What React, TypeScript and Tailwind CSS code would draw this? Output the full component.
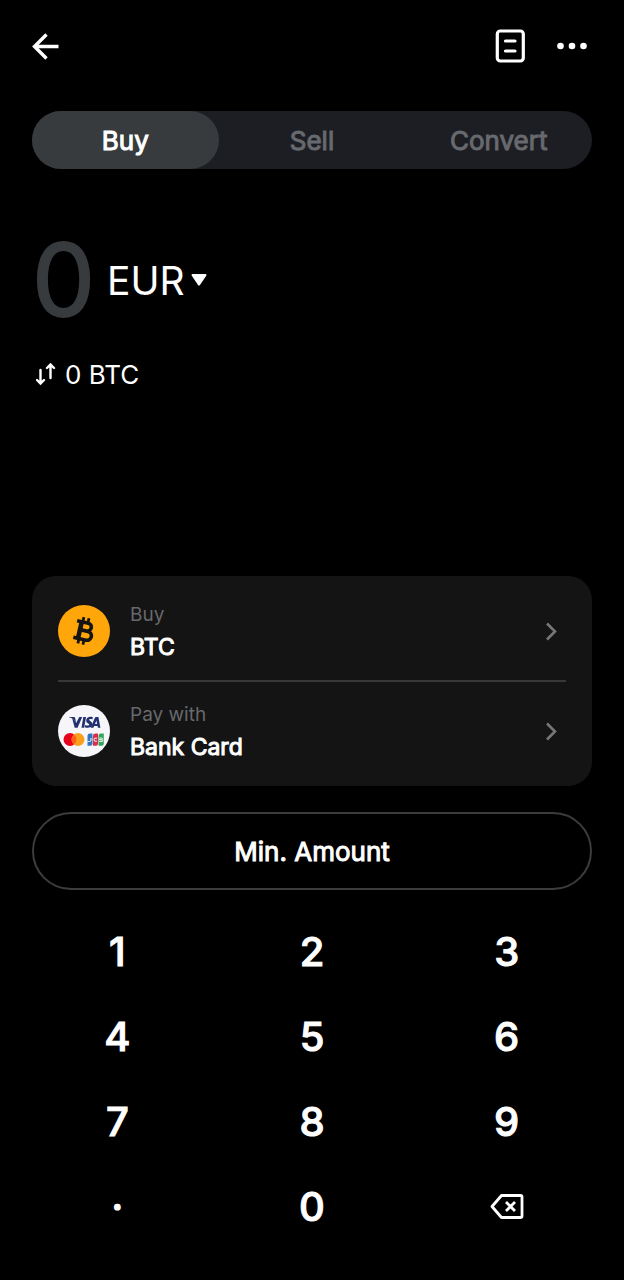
import { useState } from "react";
import clsx from "clsx";

const TABS = ["Buy", "Sell", "Convert"];
const CURRENCIES = ["EUR", "USD", "GBP"];
const KEYS = ["1", "2", "3", "4", "5", "6", "7", "8", "9", ".", "0"];

function BackIcon() {
  return (
    <svg width="28" height="28" viewBox="0 0 28 28" fill="none" stroke="currentColor" strokeWidth="3.4" aria-hidden="true">
      <path d="M26.5 14.5H3M14.5 2.5l-12 12 12 12" />
    </svg>
  );
}

function OrdersIcon() {
  return (
    <svg width="30" height="34" viewBox="0 0 30 34" fill="none" stroke="currentColor" strokeWidth="3.2" aria-hidden="true">
      <rect x="2.3" y="2" width="26" height="30" rx="3" />
      <path d="M10.5 12h9.5M10.5 22h9.5" strokeLinecap="round" />
    </svg>
  );
}

function MoreIcon() {
  return (
    <svg width="32" height="32" viewBox="0 0 32 32" fill="currentColor" aria-hidden="true">
      <circle cx="4.5" cy="16" r="3.3" />
      <circle cx="16" cy="16" r="3.3" />
      <circle cx="27.5" cy="16" r="3.3" />
    </svg>
  );
}

function CaretIcon() {
  return (
    <svg width="16" height="14" viewBox="0 0 16 14" fill="currentColor" aria-hidden="true">
      <path d="M1.6 1h12.8c1 0 1.4 1 .8 1.8L9 12c-.5.7-1.5.7-2 0L.8 2.8C.2 2 .6 1 1.6 1z" />
    </svg>
  );
}

function SwapIcon() {
  return (
    <svg width="20" height="24" viewBox="0 0 20 24" fill="none" stroke="currentColor" strokeWidth="2.4" strokeLinecap="round" aria-hidden="true">
      <path d="M4.5 7V20M1 17l3.5 3.5L8 17" />
      <path d="M14.5 15V1.5M11 5l3.5-3.5L18 5" />
    </svg>
  );
}

function ChevronIcon() {
  return (
    <svg width="12" height="20" viewBox="0 0 12 20" fill="none" stroke="currentColor" strokeWidth="2.6" aria-hidden="true">
      <path d="M2 2.5l8 8-8 8" />
    </svg>
  );
}

function BackspaceIcon() {
  return (
    <svg width="34" height="26" viewBox="0 0 34 26" fill="none" stroke="currentColor" strokeWidth="2.8" strokeLinejoin="round" aria-hidden="true">
      <path d="M11.5 1.5h19Q32 1.5 32 3v19q0 1.5-1.5 1.5h-19L2 12.5z" />
      <path d="M16 8l9 9M25 8l-9 9" />
    </svg>
  );
}

function BitcoinLogo() {
  return (
    <svg width="52" height="52" viewBox="0 0 52 52" aria-hidden="true">
      <circle cx="26" cy="26" r="26" fill="#ffa60a" />
      <g transform="rotate(13 26 26)" fill="none" stroke="#141414">
        <path d="M17 17.5h11.5a3.9 3.9 0 0 1 0 7.8H22M22 25.7h8a4.4 4.4 0 0 1 0 8.8H17" strokeWidth="3.6" />
        <path d="M21.8 17.5v17" strokeWidth="4.6" />
        <path d="M22.8 12.5v5M28 12.5v5M22.8 34.5v5M28 34.5v5" strokeWidth="2.8" />
      </g>
    </svg>
  );
}

function CardsLogo() {
  return (
    <svg width="52" height="52" viewBox="0 0 52 52" aria-hidden="true">
      <circle cx="26" cy="26" r="26" fill="#f6f6fa" />
      <g fill="#22306f">
        <path d="M11 12h4.5c1 0 1.5.4 1.7 1.3l.9 4.5C16.8 15 14.5 13 11 12.2z" />
        <path d="M21.3 12h2.9l-4.6 10.7h-2.9L14.2 13.5c2 1 3.3 2.6 3.9 4.6z" />
        <path d="M25.3 12H28l-1.8 10.7h-2.7z" />
        <path d="M34.8 12.3l-.4 2.2c-1.5-.7-3.3-.6-3.3.3 0 1 3.1 1.4 3.1 4.2 0 3.7-4.5 4.5-7.4 3.3l.4-2.4c1.7.9 4.1.9 4.1-.3 0-1.1-3.1-1.3-3.1-4.1 0-3.2 3.7-4.4 6.6-3.2z" />
        <path d="M38 12h2.4l2 10.7h-2.5l-.3-1.6h-3.5l-.7 1.6h-2.8l4.2-9.7c.2-.7.6-1 1.2-1zm.4 3.5-1.4 3.6h2.1z" />
      </g>
      <circle cx="12" cy="34.5" r="6.5" fill="#e9001d" />
      <circle cx="20" cy="34.5" r="6.5" fill="#f99f1b" />
      <path d="M16 29.4a6.5 6.5 0 0 1 0 10.2 6.5 6.5 0 0 1 0-10.2z" fill="#fb6016" />
      <path d="M32 28.5h2.5v10.2q0 2-2 2h-3v-10q0-2.2 2.5-2.2z" fill="#2f76c2" />
      <path d="M37.5 28.5H40v10.2q0 2-2 2h-3v-10q0-2.2 2.5-2.2z" fill="#db2c4c" />
      <path d="M43 28.5h2.8v10.2q0 2-2 2h-3.3v-10q0-2.2 2.5-2.2z" fill="#36a35a" />
      <path d="M29.5 36.5h2q1.5 0 1.5-1.5v-2M39 33.2h-2q-1 0-1 1.5t1 1.5h2M41.3 33h2.3q.8 0 .8.8t-.8.8h-2.3M41.3 34.7h2.6q.9 0 .9.9t-.9.9h-2.6" fill="none" stroke="#f6f6fa" strokeWidth="1" />
    </svg>
  );
}

type OptionRowProps = {
  logo: React.ReactNode;
  label: string;
  value: string;
};

function OptionRow({ logo, label, value }: OptionRowProps) {
  return (
    <button type="button" className="flex h-[98px] w-full items-center gap-5 pr-[9px] text-left">
      {logo}
      <span className="flex flex-1 flex-col">
        <span className="text-[19px] leading-8 text-[#67686d]">{label}</span>
        <span className="text-[23px] leading-8 [-webkit-text-stroke:1px]">{value}</span>
      </span>
      <span className="text-[#77777b]">
        <ChevronIcon />
      </span>
    </button>
  );
}

export default function App() {
  const [tab, setTab] = useState("Buy");
  const [currency, setCurrency] = useState("EUR");
  const [amount, setAmount] = useState("");

  const press = (key: string) => {
    if (key === "." && amount.includes(".")) return;
    setAmount(amount === "" && key === "." ? "0." : amount + key);
  };

  return (
    <main className="flex min-h-screen flex-col bg-black pb-[31px] font-['Inter',sans-serif] text-white">
      <header className="flex h-[92px] items-center px-8">
        <button type="button" aria-label="Back" className="mr-auto">
          <BackIcon />
        </button>
        <button type="button" aria-label="Orders" className="mr-[31px]">
          <OrdersIcon />
        </button>
        <button type="button" aria-label="More" className="mr-1">
          <MoreIcon />
        </button>
      </header>

      <section className="flex flex-1 flex-col px-8 pt-[19px]">
        <div role="tablist" className="grid h-[58px] grid-cols-3 rounded-full bg-[#1d1e23]">
          {TABS.map((name) => (
            <button
              key={name}
              type="button"
              role="tab"
              aria-selected={tab === name}
              onClick={() => setTab(name)}
              className={clsx(
                "rounded-full text-[26px] [-webkit-text-stroke:1px]",
                tab === name ? "bg-[#383b3e] text-white" : "text-[#67696e]",
              )}
            >
              {name}
            </button>
          ))}
        </div>

        <div className="mt-[51px] flex h-[120px] items-center">
          <output
            aria-label="Amount"
            className={clsx("text-[100px] leading-none [-webkit-text-stroke:2px]", amount ? "text-white" : "text-[#383b3e]")}
          >
            {amount || "0"}
          </output>
          <label className="ml-3 flex items-center gap-1.5">
            <select
              aria-label="Currency"
              value={currency}
              onChange={(event) => setCurrency(event.target.value)}
              className="appearance-none bg-transparent text-[39px] leading-none [field-sizing:content]"
            >
              {CURRENCIES.map((code) => (
                <option key={code}>{code}</option>
              ))}
            </select>
            <CaretIcon />
          </label>
        </div>

        <button type="button" className="mt-[15px] flex items-center gap-[9px] self-start pl-1 text-[26px] leading-10">
          <SwapIcon />
          0 BTC
        </button>
      </section>

      <section className="mx-8 rounded-3xl bg-[#141414] px-[26px] py-1.5">
        <OptionRow logo={<BitcoinLogo />} label="Buy" value="BTC" />
        <hr className="border-t-2 border-[#38383a]" />
        <OptionRow logo={<CardsLogo />} label="Pay with" value="Bank Card" />
      </section>

      <button type="button" className="mx-8 mt-[26px] h-[78px] rounded-full border-2 border-[#3c3c3e] text-[26px] [-webkit-text-stroke:1px]">
        Min. Amount
      </button>

      <div className="mt-[19px] grid grid-cols-3 px-5">
        {KEYS.map((key) => (
          <button
            key={key}
            type="button"
            aria-label={key}
            onClick={() => press(key)}
            className="h-[85px] text-[40px] font-medium [-webkit-text-stroke:1px]"
          >
            {key === "." ? "·" : key}
          </button>
        ))}
        <button
          type="button"
          aria-label="Delete"
          onClick={() => setAmount(amount.slice(0, -1))}
          className="flex h-[85px] items-center justify-center"
        >
          <BackspaceIcon />
        </button>
      </div>
    </main>
  );
}
